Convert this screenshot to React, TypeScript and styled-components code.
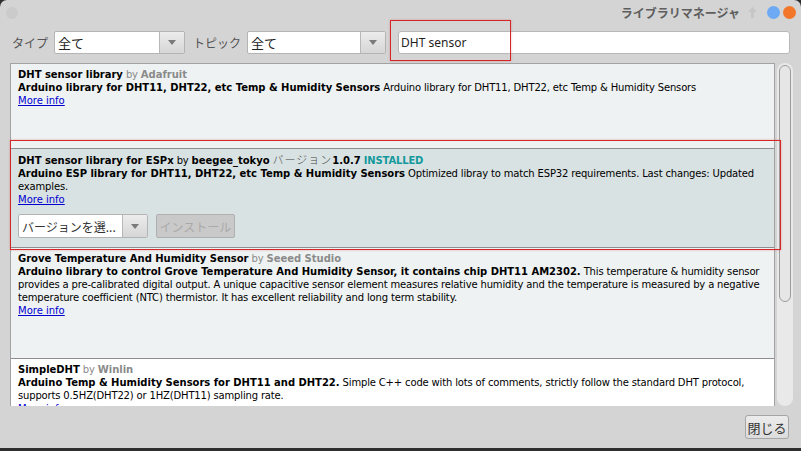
import React from "react";
import styled, { createGlobalStyle } from "styled-components";

const Global = createGlobalStyle`
  html, body { margin: 0; padding: 0; background: #2e2e2e; }
  body { width: 801px; height: 451px; overflow: hidden; font-family: "DejaVu Sans", sans-serif; }
`;

const CJK = `"Noto Sans CJK JP", "Noto Sans", sans-serif`;

const Window = styled.div`
  position: relative;
  width: 801px;
  height: 448px;
  background: #d4d4d4;
  border-radius: 7px 7px 0 0;
  display: flex;
  flex-direction: column;
  overflow: hidden;
`;

const TitleBar = styled.div`
  height: 25px;
  display: flex;
  align-items: center;
  padding: 0 5px 0 6px;
`;

const GhostDot = styled.span`
  width: 12px;
  height: 12px;
  border-radius: 50%;
  background: #cbcbcb;
`;

const Spacer = styled.div`
  flex: 1;
`;

const Title = styled.span`
  font-family: ${CJK};
  font-size: 12px;
  font-weight: 700;
  color: #5e5e5e;
`;

const ArrowIcon = styled.svg`
  margin-left: 8px;
  width: 9px;
  height: 11px;
`;

const DotGroup = styled.div`
  display: flex;
  gap: 3px;
  margin-left: 10px;
`;

const Dot = styled.span<{ $c: string }>`
  width: 13px;
  height: 13px;
  border-radius: 50%;
  background: ${(p) => p.$c};
`;

const Toolbar = styled.div`
  margin-top: 6px;
  height: 23px;
  display: flex;
  align-items: center;
  padding: 0 11px 0 12px;
`;

const Label = styled.span<{ $gap?: number }>`
  font-family: ${CJK};
  font-size: 12px;
  color: #545454;
  margin-left: ${(p) => p.$gap ?? 0}px;
  white-space: nowrap;
`;

const Select = styled.div<{ $w: number; $gap?: number }>`
  width: ${(p) => p.$w}px;
  height: 23px;
  margin-left: ${(p) => p.$gap ?? 6}px;
  display: flex;
  box-sizing: border-box;
  border: 1px solid #b4b4b4;
  border-radius: 2px;
  overflow: hidden;
  background: #fff;
`;

const SelectField = styled.div<{ $small?: boolean }>`
  flex: 1;
  display: flex;
  align-items: center;
  padding-left: 3px;
  font-family: ${CJK};
  font-size: ${(p) => (p.$small ? 12 : 13)}px;
  color: ${(p) => (p.$small ? "#333" : "#222")};
  white-space: nowrap;
`;

const DropButton = styled.div`
  width: 24px;
  border-left: 1px solid #b8b8b8;
  background: linear-gradient(#ececec, #d6d6d6);
  display: flex;
  align-items: center;
  justify-content: center;
  &::after {
    content: "";
    border-left: 4px solid transparent;
    border-right: 4px solid transparent;
    border-top: 5px solid #7a7a7a;
  }
`;

const Search = styled.div`
  flex: 1;
  height: 23px;
  margin-left: 12px;
  box-sizing: border-box;
  border: 1px solid #b8b8b8;
  border-radius: 3px;
  background: #fff;
  display: flex;
  align-items: center;
  padding-left: 2px;
  font-family: "Noto Sans", sans-serif;
  font-size: 12px;
  color: #1e1e1e;
`;

const ScrollPane = styled.div`
  margin: 9px 8px 0 10px;
  height: 343px;
  display: flex;
  gap: 2px;
`;

const Viewport = styled.div`
  flex: 1;
  box-sizing: border-box;
  border: 1px solid #a2a2a2;
  border-bottom: none;
  background: #fff;
  overflow: hidden;
`;

const Row = styled.div<{ $bg: string }>`
  background: ${(p) => p.$bg};
  padding: 4px 7px 0 7px;
  border-bottom: 1px solid #8e8e8e;
  font-size: 10px;
  line-height: 13px;
  letter-spacing: -0.16px;
  color: #000;
`;

const B = styled.b`
  font-weight: 700;
  letter-spacing: -0.02px;
`;

const By = styled.span<{ $muted?: boolean }>`
  color: ${(p) => (p.$muted ? "#8a8a8a" : "#000")};
`;

const Ver = styled.span`
  font-family: ${CJK};
  font-size: 11px;
  font-weight: 300;
  letter-spacing: 1px;
  color: #444;
`;

const Installed = styled.b`
  color: #14999c;
`;

const MoreInfo = styled.a`
  color: #0000d0;
  text-decoration: underline;
  letter-spacing: 0;
  display: block;
`;

const Controls = styled.div<{ $hidden?: boolean }>`
  visibility: ${(p) => (p.$hidden ? "hidden" : "visible")};
  margin-top: 8px;
  height: 24px;
  margin-bottom: 9px;
  display: flex;
  gap: 8px;
  letter-spacing: 0;
`;

const VersionSelect = styled(Select)`
  height: 24px;
  margin-left: 0;
`;

const InstallButton = styled.div`
  width: 79px;
  height: 24px;
  box-sizing: border-box;
  border: 1px solid #b0b0b0;
  border-radius: 2px;
  background: #c9c9c9;
  color: #a9a9a9;
  font-family: ${CJK};
  font-size: 12px;
  display: flex;
  align-items: center;
  justify-content: center;
`;

const Scrollbar = styled.div`
  width: 16px;
  box-sizing: border-box;
  background: #e9e9e9;
  border-radius: 8px;
  padding: 2px 2px;
`;

const Thumb = styled.div`
  height: 237px;
  box-sizing: border-box;
  border: 1px solid #9c9c9c;
  border-radius: 6px;
  background: #e6e6e6;
`;

const Footer = styled.div`
  display: flex;
  justify-content: flex-end;
  padding: 9px 12px 0 0;
`;

const CloseButton = styled.div`
  width: 44px;
  height: 24px;
  box-sizing: border-box;
  border: 1px solid #a6a6a6;
  border-radius: 3px;
  background: linear-gradient(#ececec, #dcdcdc);
  font-family: ${CJK};
  font-size: 13px;
  color: #333;
  display: flex;
  align-items: center;
  justify-content: center;
`;

const Highlight = styled.div<{ $x: number; $y: number; $w: number; $h: number }>`
  position: absolute;
  left: ${(p) => p.$x}px;
  top: ${(p) => p.$y}px;
  width: ${(p) => p.$w}px;
  height: ${(p) => p.$h}px;
  box-sizing: border-box;
  border: 1px solid #d42626;
  box-shadow: 0 0 2px rgba(212, 38, 38, 0.35);
  pointer-events: none;
`;

const RowControls: React.FC<{ hidden?: boolean }> = ({ hidden }) => (
  <Controls $hidden={hidden}>
    <VersionSelect $w={130}>
      <SelectField $small>バージョンを選...</SelectField>
      <DropButton />
    </VersionSelect>
    <InstallButton>インストール</InstallButton>
  </Controls>
);

export default function App() {
  return (
    <>
      <Global />
      <Window>
        <TitleBar>
          <GhostDot />
          <Spacer />
          <Title>ライブラリマネージャ</Title>
          <ArrowIcon viewBox="0 0 9 11">
            <path d="M4.5 0 L9 5 H6 V11 H3 V5 H0 Z" fill="#c6c6c6" />
          </ArrowIcon>
          <DotGroup>
            <Dot $c="#6ea9f4" />
            <Dot $c="#f2772b" />
          </DotGroup>
        </TitleBar>

        <Toolbar>
          <Label>タイプ</Label>
          <Select $w={131}>
            <SelectField>全て</SelectField>
            <DropButton />
          </Select>
          <Label $gap={8}>トピック</Label>
          <Select $w={139}>
            <SelectField>全て</SelectField>
            <DropButton />
          </Select>
          <Search>DHT sensor</Search>
        </Toolbar>

        <ScrollPane>
          <Viewport>
            <Row $bg="#eef2f2">
              <div>
                <B>DHT sensor library</B> <By $muted>by <B>Adafruit</B></By>
              </div>
              <div>
                <B>Arduino library for DHT11, DHT22, etc Temp &amp; Humidity Sensors</B> Arduino library
                for DHT11, DHT22, etc Temp &amp; Humidity Sensors
              </div>
              <MoreInfo>More info</MoreInfo>
              <RowControls hidden />
            </Row>
            <Row $bg="#d9e2e2">
              <div>
                <B>DHT sensor library for ESPx</B> <By>by</By> <B>beegee_tokyo</B> <Ver>バージョン</Ver>
                <B>1.0.7</B> <Installed>INSTALLED</Installed>
              </div>
              <div>
                <B>Arduino ESP library for DHT11, DHT22, etc Temp &amp; Humidity Sensors</B> Optimized
                libray to match ESP32 requirements. Last changes: Updated examples.
              </div>
              <MoreInfo>More info</MoreInfo>
              <RowControls />
            </Row>
            <Row $bg="#eef2f2">
              <div>
                <B>Grove Temperature And Humidity Sensor</B> <By $muted>by <B>Seeed Studio</B></By>
              </div>
              <div>
                <B>
                  Arduino library to control Grove Temperature And Humidity Sensor, it contains chip DHT11
                  AM2302.
                </B>{" "}
                This temperature &amp; humidity sensor provides a pre-calibrated digital output. A unique
                capacitive sensor element measures relative humidity and the temperature is measured by a
                negative temperature coefficient (NTC) thermistor. It has excellent reliability and long
                term stability.
              </div>
              <MoreInfo>More info</MoreInfo>
              <RowControls hidden />
            </Row>
            <Row $bg="#ffffff">
              <div>
                <B>SimpleDHT</B> <By $muted>by <B>Winlin</B></By>
              </div>
              <div>
                <B>Arduino Temp &amp; Humidity Sensors for DHT11 and DHT22.</B> Simple C++ code with lots of
                comments, strictly follow the standard DHT protocol, supports 0.5HZ(DHT22) or 1HZ(DHT11)
                sampling rate.
              </div>
              <MoreInfo>More info</MoreInfo>
              <RowControls hidden />
            </Row>
          </Viewport>
          <Scrollbar>
            <Thumb />
          </Scrollbar>
        </ScrollPane>

        <Footer>
          <CloseButton>閉じる</CloseButton>
        </Footer>

        <Highlight $x={390} $y={20} $w={121} $h={41} />
        <Highlight $x={10} $y={140} $w={771} $h={110} />
      </Window>
    </>
  );
}
